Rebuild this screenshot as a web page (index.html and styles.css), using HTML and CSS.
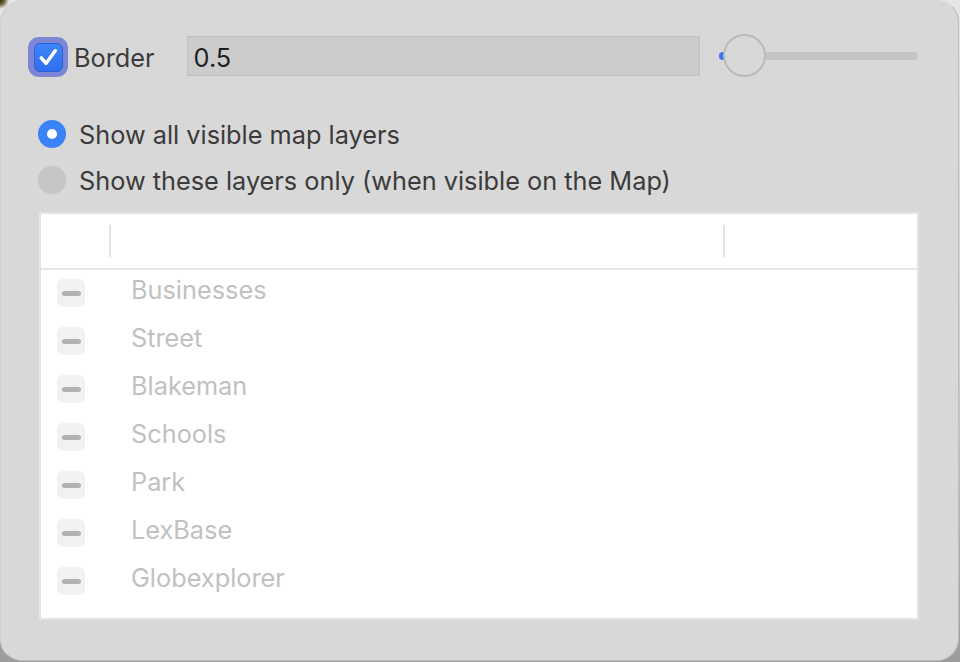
FILE: index.html
```html
<!DOCTYPE html>
<html>
<head>
<meta charset="utf-8">
<link rel="stylesheet" href="styles.css">
</head>
<body>
<div class="window">
  <div class="top-row">
    <label class="check">
      <span class="check-ring"><span class="check-box">
        <svg width="28" height="28" viewBox="0 0 28 28"><path d="M6.5 15 L11.5 20.5 L21 7.5" fill="none" stroke="#fff" stroke-width="3.6" stroke-linecap="round" stroke-linejoin="round"/></svg>
      </span></span>
      <span class="label">Border</span>
    </label>
    <div class="field">0.5</div>
    <div class="slider">
      <div class="track"><div class="fill"></div></div>
      <div class="knob"></div>
    </div>
  </div>
  <div class="radios">
    <div class="radio-row"><span class="radio on"></span><span class="label">Show all visible map layers</span></div>
    <div class="radio-row"><span class="radio"></span><span class="label">Show these layers only (when visible on the Map)</span></div>
  </div>
  <div class="table">
    <div class="thead">
      <div class="th th-check"></div>
      <div class="th th-name"></div>
      <div class="th th-last"></div>
    </div>
    <div class="tbody">
      <div class="tr"><span class="mixed"><span class="dash"></span></span><span class="name">Businesses</span></div>
      <div class="tr"><span class="mixed"><span class="dash"></span></span><span class="name">Street</span></div>
      <div class="tr"><span class="mixed"><span class="dash"></span></span><span class="name">Blakeman</span></div>
      <div class="tr"><span class="mixed"><span class="dash"></span></span><span class="name">Schools</span></div>
      <div class="tr"><span class="mixed"><span class="dash"></span></span><span class="name">Park</span></div>
      <div class="tr"><span class="mixed"><span class="dash"></span></span><span class="name">LexBase</span></div>
      <div class="tr"><span class="mixed"><span class="dash"></span></span><span class="name">Globexplorer</span></div>
    </div>
  </div>
</div>
</body>
</html>
```
FILE: styles.css
```css
html, body {
  margin: 0;
  padding: 0;
}
body {
  width: 960px;
  height: 662px;
  overflow: hidden;
  background:
    radial-gradient(circle at 0 0, #2e2a1c 0, #6b5a2a 4px, rgba(120,100,60,0) 9px),
    linear-gradient(180deg, #e6e6e6 0%, #c9c9c9 60%, #9c9c9c 100%);
  font-family: "Inter", "Liberation Sans", sans-serif;
}
.window {
  box-sizing: border-box;
  width: 959px;
  height: 661px;
  background: #d7d8d7;
  border: 1px solid #bdbebd;
  border-top-color: #d7d8d7;
  border-left-color: #d0d1d0;
  border-radius: 22px;
  padding: 35px 0 0 37px;
}
.top-row {
  display: flex;
  align-items: center;
  height: 40px;
}
.check {
  display: flex;
  align-items: center;
  margin-left: -10px;
  margin-top: 2px;
}
.check-ring {
  width: 40px;
  height: 40px;
  border-radius: 11px;
  background: #7c86d5;
  display: flex;
  align-items: center;
  justify-content: center;
}
.check-box {
  box-sizing: border-box;
  width: 29px;
  height: 29px;
  border-radius: 6px;
  background: linear-gradient(180deg, #3d86f8, #2f6ff0);
  border: 1px solid #2b5fd6;
  display: flex;
  align-items: center;
  justify-content: center;
}
.label {
  font-size: 25.3px;
  color: #3b3b3b;
}
.check .label {
  margin-left: 6px;
}
.field {
  box-sizing: border-box;
  margin-left: 32px;
  width: 513px;
  height: 40px;
  background: #cbcccb;
  border: 1px solid #c0c1c0;
  padding: 3px 0 0 6px;
  font-size: 25.3px;
  color: #1f1f1f;
  display: flex;
  align-items: center;
}
.slider {
  position: relative;
  margin-left: 19px;
  width: 199px;
  height: 44px;
  display: flex;
  align-items: center;
}
.track {
  width: 100%;
  height: 8px;
  border-radius: 4px;
  background: #c3c4c3;
  overflow: hidden;
}
.fill {
  width: 12px;
  height: 100%;
  background: #3478f6;
}
.knob {
  position: absolute;
  left: 4px;
  top: 0;
  box-sizing: border-box;
  width: 43px;
  height: 43px;
  border-radius: 50%;
  border: 2px solid #b9bab9;
  background: #d7d8d7;
}
.radios {
  margin-top: 44px;
  display: flex;
  flex-direction: column;
  gap: 18px;
}
.radio-row {
  display: flex;
  align-items: center;
  height: 28px;
}
.radio-row .label {
  margin-top: 1px;
}
.radio {
  width: 28px;
  height: 28px;
  border-radius: 50%;
  background: #c4c5c4;
  margin-right: 13px;
  display: flex;
  align-items: center;
  justify-content: center;
}
.radio.on {
  background: #3a82f7;
}
.radio.on::after {
  content: "";
  width: 10px;
  height: 10px;
  border-radius: 50%;
  background: #fff;
}
.table {
  box-sizing: border-box;
  margin-top: 18px;
  margin-left: 1px;
  width: 880px;
  height: 408px;
  background: #fff;
  border: 2px solid #e4e4e4;
}
.thead {
  display: flex;
  align-items: center;
  height: 54px;
  border-bottom: 2px solid #e5e5e5;
}
.th {
  height: 32px;
}
.th-check {
  width: 68px;
  border-right: 2px solid #e3e3e3;
}
.th-name {
  width: 612px;
  border-right: 2px solid #e3e3e3;
}
.tr {
  display: flex;
  align-items: center;
  height: 48px;
  padding-left: 16px;
}
.tr:first-child {
  margin-top: -1px;
}
.mixed {
  width: 28px;
  height: 28px;
  border-radius: 6px;
  background: #f1f1f1;
  display: flex;
  align-items: center;
  justify-content: center;
}
.dash {
  width: 19px;
  height: 5px;
  border-radius: 3px;
  background: #b2b2b2;
}
.name {
  margin-left: 46px;
  margin-top: -7px;
  font-size: 25.3px;
  color: #c1c1c1;
}
```
